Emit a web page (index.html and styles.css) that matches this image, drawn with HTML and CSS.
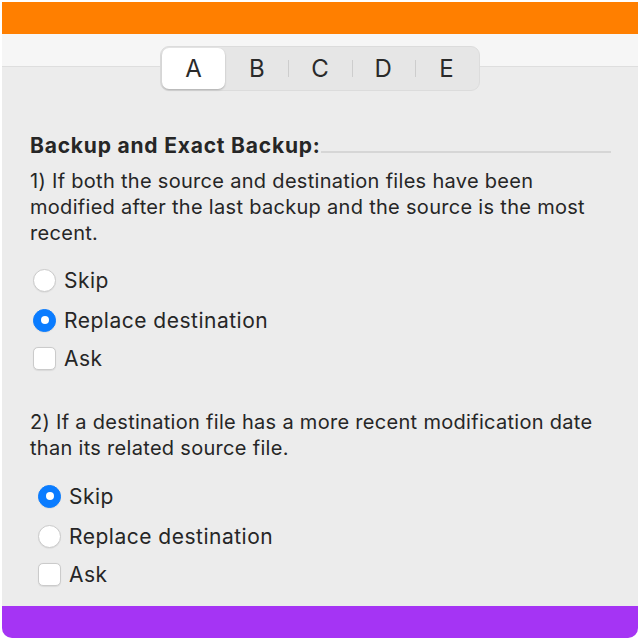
FILE: index.html
```html
<!DOCTYPE html>
<html lang="en">
<head>
    <meta charset="UTF-8">
    <title>Backup options</title>
    <link rel="stylesheet" href="styles.css">
</head>
<body>

<div class="window">
    <div class="topbar"></div>

    <div class="toolbar">
        <div class="segmented">
            <div class="seg active">A</div>
            <div class="seg">B</div>
            <div class="seg">C</div>
            <div class="seg">D</div>
            <div class="seg">E</div>
        </div>
    </div>

    <div class="content">
        <h2 class="heading">Backup and Exact Backup:</h2>

        <p class="para">1) If both the source and destination files have been modified after the last backup and the source is the most recent.</p>
        <ul class="options">
            <li class="opt"><span class="radio"></span>Skip</li>
            <li class="opt"><span class="radio on"></span>Replace destination</li>
            <li class="opt ask"><span class="check"></span>Ask</li>
        </ul>

        <p class="para second">2) If a destination file has a more recent modification date than its related source file.</p>
        <ul class="options indent">
            <li class="opt"><span class="radio on"></span>Skip</li>
            <li class="opt"><span class="radio"></span>Replace destination</li>
            <li class="opt ask"><span class="check"></span>Ask</li>
        </ul>
    </div>

    <div class="bottombar"></div>
</div>

</body>
</html>
```

FILE: styles.css
```css
*{margin: 0; padding: 0;}
html,body{
    height: 100%;
}
body{
    background: #fff;
    font-family: Inter, "Liberation Sans", sans-serif;
    color: #262626;
}
.window{
    width: 636px;
    height: 636px;
    margin: 2px;
    background: #ececec;
    border-radius: 0 0 10px 10px;
    overflow: hidden;
    display: flex;
    flex-direction: column;
}
.topbar{
    height: 32px;
    background: #ff7f00;
}
.toolbar{
    height: 32px;
    background: #f6f6f6;
    border-bottom: 1px solid #dedede;
    display: flex;
    justify-content: center;
    align-items: flex-start;
}
.segmented{
    position: relative;
    z-index: 1;
    margin: 12px 0 0 0;
    width: 316px;
    height: 41px;
    padding: 1px;
    background: #e6e6e6;
    border: 1px solid #dcdcdc;
    border-radius: 9px;
    display: flex;
}
.seg{
    flex: 1;
    display: flex;
    align-items: center;
    justify-content: center;
    font-size: 24px;
    color: #2a2a2a;
    position: relative;
}
.seg + .seg::before{
    content: "";
    position: absolute;
    left: 0;
    top: 12px;
    height: 17px;
    border-left: 1px solid #cdcdcd;
}
.seg.active{
    background: #fff;
    border-radius: 7px;
    box-shadow: 0 1px 2px rgba(0,0,0,0.25);
}
.seg.active + .seg::before{
    display: none;
}
.content{
    flex: 1;
    padding: 66px 27px 0 28px;
}
.heading{
    display: flex;
    align-items: center;
    font-size: 21px;
    line-height: 26px;
    font-weight: 700;
    letter-spacing: 0.8px;
}
.heading::after{
    content: "";
    flex: 1;
    margin: 12px 0 0 0;
    border-bottom: 2px solid #d6d6d6;
}
.para{
    margin-top: 9px;
    font-size: 20px;
    line-height: 26px;
    letter-spacing: 0.3px;
}
.para.second{
    margin-top: 38px;
}
.options{
    list-style: none;
    margin-top: 21px;
    padding-left: 3px;
}
.options.indent{
    margin-top: 22px;
    padding-left: 8px;
}
.opt{
    display: flex;
    align-items: center;
    height: 26px;
    font-size: 21px;
    letter-spacing: 0.5px;
    margin-bottom: 14px;
}
.opt.ask{
    margin-top: -2px;
}
.radio{
    width: 21px;
    height: 21px;
    border-radius: 50%;
    background: #fff;
    border: 1px solid #cbcbcb;
    margin-right: 8px;
    box-shadow: 0 0.5px 1px rgba(0,0,0,0.08);
    display: flex;
    align-items: center;
    justify-content: center;
}
.radio.on{
    background: #0a7cff;
    border-color: #0a7cff;
}
.radio.on::after{
    content: "";
    width: 8px;
    height: 8px;
    border-radius: 50%;
    background: #fff;
}
.check{
    width: 21px;
    height: 21px;
    border-radius: 5px;
    background: #fff;
    border: 1px solid #cbcbcb;
    margin-right: 8px;
    box-shadow: 0 0.5px 1px rgba(0,0,0,0.08);
}
.bottombar{
    height: 32px;
    background: #a534f4;
}
```
